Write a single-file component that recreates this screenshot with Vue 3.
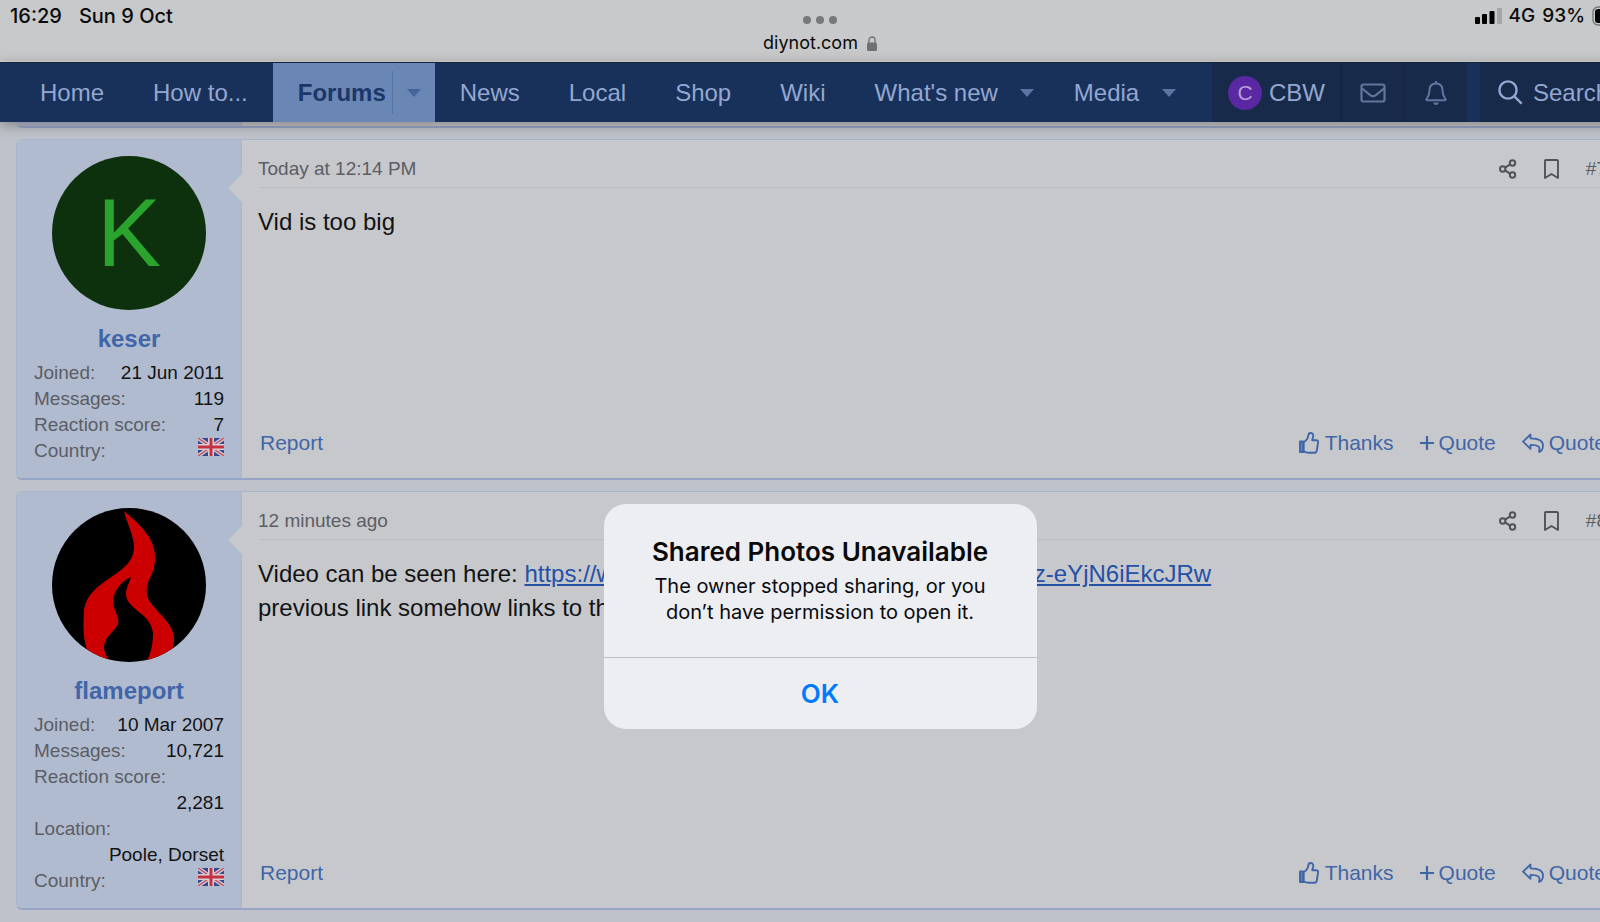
<script setup>
const navBefore = ['Home', 'How to...']
const navAfter = [
  { label: 'News' },
  { label: 'Local' },
  { label: 'Shop' },
  { label: 'Wiki' },
  { label: "What's new", menu: true },
  { label: 'Media', menu: true },
]

const posts = [
  {
    id: 7,
    user: 'keser',
    date: 'Today at 12:14 PM',
    stats: [
      { term: 'Joined:', value: '21 Jun 2011' },
      { term: 'Messages:', value: '119' },
      { term: 'Reaction score:', value: '7' },
      { term: 'Country:', flag: true },
    ],
  },
  {
    id: 8,
    user: 'flameport',
    date: '12 minutes ago',
    stats: [
      { term: 'Joined:', value: '10 Mar 2007' },
      { term: 'Messages:', value: '10,721' },
      { term: 'Reaction score:', value: '2,281' },
      { term: 'Location:', value: 'Poole, Dorset' },
      { term: 'Country:', flag: true },
    ],
  },
]
</script>

<template>
  <div class="viewport">
    <div class="screen">
      <header class="status">
        <div class="clock"><span>16:29</span><span>Sun 9 Oct</span></div>
        <div class="address">
          <div class="dots"><i></i><i></i><i></i></div>
          <div class="host">
            diynot.com
            <svg width="10" height="15" viewBox="0 0 10 15">
              <path d="M2 7V4a3 3 0 0 1 6 0v3" fill="none" stroke="#6f7073" stroke-width="1.3" />
              <rect y="6.500" width="10" height="8.500" rx="1.500" fill="#6f7073" />
            </svg>
          </div>
        </div>
        <div class="signal">
          <svg width="27" height="18" viewBox="0 0 27 18">
            <rect x="0" y="10" width="5" height="7" rx="1" />
            <rect x="7" y="7" width="5" height="10" rx="1" />
            <rect x="14.500" y="4" width="5" height="13" rx="1" />
            <rect x="22" y="1" width="5" height="16" rx="1" fill="#a4a5a7" />
          </svg>
          <span>4G</span>
          <span>93%</span>
          <svg class="battery" width="38" height="20" viewBox="0 0 38 20">
            <rect x="1" y="1" width="33" height="18" rx="5" fill="none" stroke="#77787a" stroke-width="1.400" />
            <rect x="3" y="3" width="28" height="14" rx="3" />
            <path d="M36 7q2 3 0 6z" fill="#77787a" />
          </svg>
        </div>
      </header>

      <nav class="nav">
        <div class="links">
          <a v-for="label in navBefore" :key="label" class="item" href="#">{{ label }}</a>
          <div class="item active">
            <a href="#">Forums</a>
            <button class="caret split" type="button" aria-label="Forums menu">
              <svg width="14" height="8" viewBox="0 0 14 8"><path d="M0 0h14L7 8z" /></svg>
            </button>
          </div>
          <template v-for="item in navAfter" :key="item.label">
            <div v-if="item.menu" class="item menu">
              <a href="#">{{ item.label }}</a>
              <button class="caret" type="button" :aria-label="item.label + ' menu'">
                <svg width="14" height="8" viewBox="0 0 14 8"><path d="M0 0h14L7 8z" /></svg>
              </button>
            </div>
            <a v-else class="item" href="#">{{ item.label }}</a>
          </template>
        </div>
        <div class="account">
          <a class="user" href="#"><span class="mini">C</span>CBW</a>
          <button class="tool" type="button" aria-label="Inbox">
            <svg width="26" height="20" viewBox="0 0 26 20" fill="none" stroke="#61769f" stroke-width="2.200">
              <rect x="1.500" y="1.500" width="23" height="17" rx="2" />
              <path d="M2 5.500l8.500 6.800q2.500 1.700 5 0L24 5.500" />
            </svg>
          </button>
          <button class="tool" type="button" aria-label="Alerts">
            <svg width="22" height="26" viewBox="0 0 22 26" fill="none" stroke="#61769f" stroke-width="2" stroke-linejoin="round">
              <path d="M11 1v2M11 3.500c-4.300 0-6.500 3-6.500 7 0 5-1.500 6.500-3 8.500-.4.700-.2 1.200.5 1.200h18c.7 0 .9-.5.5-1.200-1.500-2-3-3.500-3-8.500 0-4-2.200-7-6.500-7z" />
              <path d="M8 22.500h6q-.8 2.500-3 2.500t-3-2.500z" fill="#61769f" stroke="none" />
            </svg>
          </button>
        </div>
        <button class="search" type="button">
          <svg width="25" height="25" viewBox="0 0 25 25" fill="none" stroke="#93a7d0" stroke-width="2.400">
            <circle cx="10" cy="10" r="8.600" /><path d="M16.300 16.300l7.400 7.400" />
          </svg>
          Search
        </button>
      </nav>

      <main>
        <div class="post stub"><div class="side"></div></div>

        <article v-for="post in posts" :key="post.id" class="post">
          <aside class="side">
            <svg v-if="post.id === 8" class="avatar" width="154" height="154" viewBox="0 0 154 154">
              <defs><clipPath id="round"><circle cx="77" cy="77" r="77" /></clipPath></defs>
              <g clip-path="url(#round)">
                <rect width="154" height="154" fill="#000" />
                <path d="M72 3C90 18 104 32 103 51C103 68 93 71 95 87C97 99 121 113 122 129C122 136 121 141 118 146L108 156H93C99 147 101 136 101 125C99 105 74 101 74 86C74 80 77 76 79 69C70 73 62 81 61 94C62 104 68 109 66 116C64 122 52 129 52 139C52 145 56 151 60 156H42L35 142C31 130 31 116 32 105C34 70 82 69 82 39C82 28 75 15 72 3z" fill="#cc0000" />
              </g>
            </svg>
            <div v-else class="avatar letter">K</div>
            <a class="name" href="#">{{ post.user }}</a>
            <dl>
              <div v-for="stat in post.stats" :key="stat.term">
                <dt>{{ stat.term }}</dt>
                <dd>
                  <svg v-if="stat.flag" width="26" height="18" viewBox="0 0 26 18" role="img" aria-label="United Kingdom">
                    <rect width="26" height="18" fill="#354a8e" />
                    <path d="M0 0l26 18M26 0L0 18" stroke="#cfc9d6" stroke-width="4" />
                    <path d="M0 0l26 18M26 0L0 18" stroke="#c84a57" stroke-width="1.400" />
                    <path d="M13 0v18M0 9h26" stroke="#d6cfd8" stroke-width="6" />
                    <path d="M13 0v18M0 9h26" stroke="#c5323f" stroke-width="3" />
                  </svg>
                  <template v-else>{{ stat.value }}</template>
                </dd>
              </div>
            </dl>
            <svg class="pointer" width="15" height="28" viewBox="0 0 15 28">
              <path d="M15 0L1 14l14 14z" fill="#c7c8cc" /><path d="M14.500 0L1 14l13.500 14" fill="none" stroke="#b5c1d2" />
            </svg>
          </aside>
          <section class="body">
            <div class="head">
              <a href="#">{{ post.date }}</a>
              <div class="marks">
                <a href="#" aria-label="Share">
                  <svg width="18" height="20" viewBox="0 0 18 20" fill="none" stroke="#505257" stroke-width="2">
                    <circle cx="3.700" cy="10" r="2.700" /><circle cx="13.500" cy="4" r="2.700" /><circle cx="13.500" cy="16" r="2.700" />
                    <path d="M6 8.600l5.200-3.200M6 11.400l5.200 3.200" />
                  </svg>
                </a>
                <a href="#" aria-label="Bookmark">
                  <svg width="15" height="20" viewBox="0 0 15 20" fill="none" stroke="#505257" stroke-width="1.900" stroke-linejoin="round">
                    <path d="M1 2q0-1 1-1h11q1 0 1 1v17l-6.500-4L1 19z" />
                  </svg>
                </a>
                <a href="#">#{{ post.id }}</a>
              </div>
            </div>
            <p v-if="post.id === 7" class="message">Vid is too big</p>
            <p v-else class="message">
              Video can be seen here: <a href="#">https://w<span class="covered"></span>z-eYjN6iEkcJRw</a><br />
              previous link somehow links to th
            </p>
            <div class="actions">
              <a href="#">Report</a>
              <div class="replies">
                <a class="thanks" href="#">
                  <svg width="20" height="22" viewBox="0 0 20 22" fill="none" stroke="#3f66a8" stroke-width="1.900" stroke-linejoin="round">
                    <path d="M1 9.500h3.300V20H1z" fill="#3f66a8" fill-opacity=".7" />
                    <path d="M4.600 10.300C8 8 9 6.300 9.300 3.600 9.500 1.600 10.300 1 11.500 1c2 0 3 1.600 2.700 3.600-.2 1.400-.8 2.400-1 3.600h4c1.400 0 2 .9 1.900 2l-1.300 8.300c-.3 1.600-1 2.300-2.600 2.300h-4.500c-2.500 0-3.700-.5-6.100-1.400z" />
                  </svg>
                  Thanks
                </a>
                <a class="quote" href="#">
                  <svg width="14" height="16" viewBox="0 0 14 16" fill="none" stroke="#3f66a8" stroke-width="2.200"><path d="M7 1v14M0 8h14" /></svg>
                  Quote
                </a>
                <a class="quote" href="#">
                  <svg width="22" height="20" viewBox="0 0 22 20" fill="none" stroke="#3f66a8" stroke-width="1.800" stroke-linejoin="round">
                    <path d="M1 8.600L8.500 1.500V5.300C16 5.300 21 7.500 21 12.500c0 3-1.200 5.200-3.200 6.300-.8.400-1-.2-.7-.9 1.600-4.300-1.400-6.100-8.600-6.100v4z" />
                  </svg>
                  Quote
                </a>
              </div>
            </div>
          </section>
        </article>
      </main>

      <div class="overlay">
        <div class="alert" role="alertdialog" aria-labelledby="alert-title" aria-describedby="alert-text">
          <div class="copy">
            <h1 id="alert-title">Shared Photos Unavailable</h1>
            <p id="alert-text">The owner stopped sharing, or you don’t have permission to open it.</p>
          </div>
          <button type="button">OK</button>
        </div>
      </div>
    </div>
  </div>
</template>

<style>
body {
  margin: 0;
  background: #bfc2ca;
}
</style>

<style scoped>
* {
  box-sizing: border-box;
}
a {
  color: inherit;
  text-decoration: none;
}
button {
  border: 0;
  padding: 0;
  background: none;
  color: inherit;
  font: inherit;
}
svg {
  display: block;
  flex: none;
}
.viewport {
  overflow: hidden;
}
.screen {
  position: relative;
  width: calc(100% + 40px);
  min-height: 100vh;
  padding-bottom: 12px;
  background: #bfc2ca;
  font-family: "Liberation Sans", Arial, sans-serif;
}

.status {
  display: grid;
  grid-template-columns: 1fr auto 1fr;
  height: 62px;
  padding: 4px 10px 0 10px;
  background: #c8c9ca;
  border-bottom: 1px solid #dadbd0;
  color: #0b0b0c;
  font: 500 19px/24px Inter, "Liberation Sans", sans-serif;
}
.clock {
  display: flex;
  gap: 17px;
  font-size: 20px;
}
.address {
  display: flex;
  flex-direction: column;
  align-items: center;
}
.dots {
  display: flex;
  gap: 5px;
  padding-top: 12px;
}
.dots i {
  width: 8px;
  height: 8px;
  border-radius: 50%;
  background: #77787a;
}
.host {
  display: flex;
  align-items: center;
  gap: 9px;
  padding-top: 7px;
  font-size: 18px;
  font-weight: 400;
}
.signal {
  display: flex;
  justify-content: flex-end;
  align-items: center;
  gap: 7px;
  height: 24px;
}

.nav {
  position: relative;
  z-index: 1;
  display: flex;
  height: 60px;
  background: #18315b;
  border-top: 1px solid #10203f;
  box-shadow: 0 3px 12px rgba(40, 30, 30, 0.4);
  color: #93a7d0;
  font-size: 24px;
  white-space: nowrap;
}
.links {
  display: flex;
  flex: 1;
  gap: 1px;
  padding-left: 16px;
}
.item {
  display: flex;
  align-items: center;
  padding: 0 24px;
}
.item.active {
  gap: 6px;
  padding-left: 25px;
  padding-right: 0;
  background: #6a86b4;
  color: #1b376a;
  font-weight: 700;
}
.item.menu {
  gap: 8px;
  padding-right: 0;
}
.caret {
  display: grid;
  place-items: center;
  width: 43px;
  height: 43px;
  fill: #5d73a1;
}
.caret.split {
  border-left: 1px solid #5774a8;
  fill: #46639a;
}
.account {
  display: flex;
  margin-right: 13px;
  background: #172a49;
}
.user {
  display: flex;
  align-items: center;
  gap: 7px;
  padding: 0 16px;
}
.mini {
  display: grid;
  place-items: center;
  width: 34px;
  height: 34px;
  border-radius: 50%;
  background: #5a28a3;
  color: #bb9fdb;
  font-size: 21px;
}
.tool {
  display: grid;
  place-items: center;
  width: 63px;
  border-left: 1px solid #14243f;
}
.search {
  display: flex;
  align-items: center;
  gap: 10px;
  width: 160px;
  padding-left: 18px;
  background: #172a49;
}

main {
  display: flex;
  flex-direction: column;
  gap: 11px;
  padding: 0 16px;
}
.post {
  display: flex;
  border: 1px solid #a8b7ce;
  border-bottom: 2px solid #95a5c6;
  border-radius: 6px;
  background: #c7c8cc;
}
.post.stub {
  height: 6px;
  border-top: 0;
  border-radius: 0 0 6px 6px;
}
.side {
  position: relative;
  flex: none;
  width: 225px;
  padding: 16px 17px 14px;
  border-right: 1px solid #a9b8d0;
  border-radius: 5px 0 0 5px;
  background: #b1bbcf;
}
.stub .side {
  padding: 0;
}
.avatar {
  width: 154px;
  height: 154px;
  margin: 0 auto;
}
.letter {
  display: grid;
  place-items: center;
  border-radius: 50%;
  background: #0d300d;
  color: #2aa42c;
  font-size: 96px;
  line-height: 154px;
}
.name {
  display: block;
  margin: 14px 0 6px;
  color: #3f66a8;
  font-size: 24px;
  font-weight: 700;
  line-height: 30px;
  text-align: center;
}
dl {
  margin: 0;
  font-size: 19px;
  line-height: 26px;
}
dl div {
  display: flex;
  flex-wrap: wrap;
  column-gap: 16px;
}
dt {
  color: #5b5e65;
}
dd {
  margin: 0 0 0 auto;
  color: #121315;
}
.pointer {
  position: absolute;
  top: 34px;
  right: -1px;
}
.body {
  display: flex;
  flex: 1;
  flex-direction: column;
  padding: 17px 15px 23px 16px;
}
.head {
  display: flex;
  justify-content: space-between;
  padding-bottom: 6px;
  border-bottom: 1px solid #b9bdca;
  color: #5b5e65;
  font-size: 19px;
  line-height: 24px;
}
.marks {
  display: flex;
  align-items: center;
  gap: 27px;
  padding-right: 1px;
}
.message {
  margin: 17px 0 0;
  color: #121315;
  font-size: 24px;
  line-height: 34px;
}
.message a {
  color: #2450a8;
  text-decoration: underline;
}
.covered {
  display: inline-block;
  width: 420px;
}
.actions {
  display: flex;
  justify-content: space-between;
  margin-top: auto;
  padding: 0 2px;
  color: #3f66a8;
  font-size: 21px;
  line-height: 24px;
}
.replies {
  display: flex;
  gap: 26px;
}
.replies a {
  display: flex;
  align-items: center;
}
.thanks {
  gap: 6px;
}
.quote {
  gap: 5px;
}

.overlay {
  position: absolute;
  inset: 0;
  z-index: 2;
  display: grid;
  place-items: center;
  padding-top: 310px;
}
.alert {
  width: 433px;
  border-radius: 22px;
  overflow: hidden;
  background: #edeef2;
  color: #0a0a0b;
  font-family: Inter, "Liberation Sans", sans-serif;
  text-align: center;
}
.copy {
  padding: 31px 40px 32px;
  border-bottom: 1px solid #bfc0c5;
}
.alert h1 {
  margin: 0;
  font-size: 26px;
  font-weight: 600;
  line-height: 34px;
  white-space: nowrap;
}
.alert p {
  margin: 4px 0 0;
  font-size: 20px;
  line-height: 26px;
}
.alert button {
  width: 100%;
  height: 71px;
  color: #007aff;
  font-size: 26px;
  font-weight: 600;
}
</style>
